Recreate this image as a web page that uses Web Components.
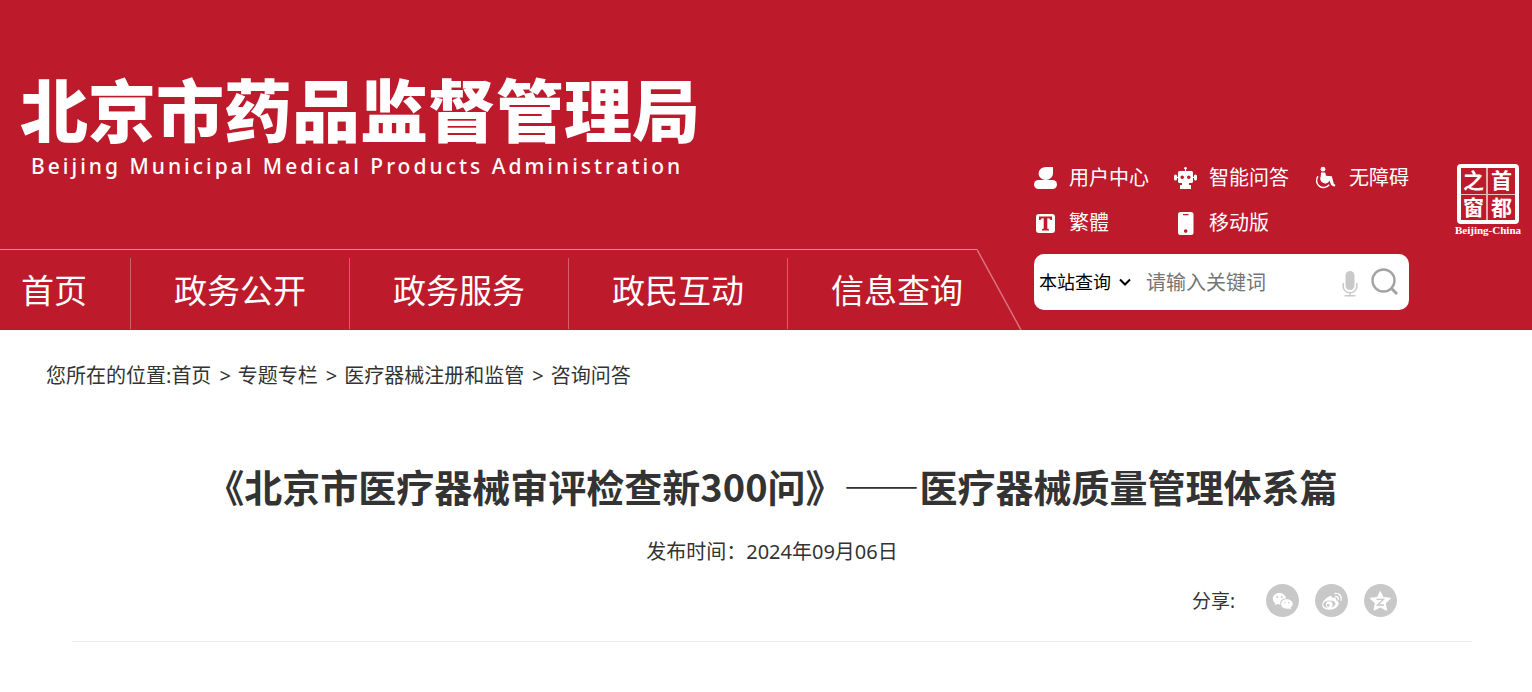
<!DOCTYPE html>
<html lang="zh-CN">
<head>
<meta charset="utf-8">
<meta name="viewport" content="width=device-width, initial-scale=1">
<title>北京市药品监督管理局</title>
<style>
  body {
    margin: 0;
    background: #fff;
    color: #333;
    font: 20px/28px "Noto Sans", "Noto Sans CJK SC", sans-serif;
    --brand: #bd1a2c;
    --hairline: #de8c95;
  }
</style>
</head>
<body>
<site-header></site-header>
<main>
  <bread-crumb></bread-crumb>
  <article-head date="2024年09月06日">《北京市医疗器械审评检查新300问》——医疗器械质量管理体系篇</article-head>
</main>

<template id="site-header">
  <style>
    :host { display: block; background: var(--brand); color: #fff; }
    header { display: flex; align-items: flex-end; justify-content: space-between; min-height: 330px; }
    .left { display: flex; flex-direction: column; gap: 65px; }
    .right { display: flex; align-items: flex-start; gap: 45px; padding: 0 10px 20px 0; }
    .panel { width: 375px; }
  </style>
  <header>
    <div class="left"><site-logo></site-logo><site-nav></site-nav></div>
    <div class="right">
      <div class="panel"><tool-links></tool-links><site-search></site-search></div>
      <capital-seal></capital-seal>
    </div>
  </header>
</template>

<template id="site-logo">
  <style>
    :host { display: block; padding-left: 20px; white-space: nowrap; }
    h1 { margin: 0; font: 900 68px/70px "Liberation Sans", "Noto Sans CJK SC", sans-serif; }
    p { margin: 0; padding-left: 11px; font: 500 21px/36px "Noto Sans", sans-serif; letter-spacing: 3px; }
  </style>
  <h1>北京市药品监督管理局</h1>
  <p lang="en">Beijing Municipal Medical Products Administration</p>
</template>

<template id="site-nav">
  <style>
    :host { display: block; }
    nav { display: flex; }
    ul { display: flex; margin: 0; padding: 8px 14px 1px 0; list-style: none; border-top: 1px solid var(--hairline); }
    li { height: 71px; padding: 0 43px; border-right: 1px solid #d45f6c; }
    li:first-child { padding-left: 21px; }
    li:last-child { padding-right: 0; border: 0; }
    a { display: block; color: inherit; text-decoration: none; font-size: 33px; line-height: 66px; }
    svg { display: block; width: 45px; height: 81px; }
  </style>
  <nav aria-label="主导航">
    <ul>
      <li><a href="#">首页</a></li>
      <li><a href="#">政务公开</a></li>
      <li><a href="#">政务服务</a></li>
      <li><a href="#">政民互动</a></li>
      <li><a href="#">信息查询</a></li>
    </ul>
    <svg viewBox="0 0 45 81" aria-hidden="true"><path d="M0 .5 44 81" fill="none" stroke="#d9747f" stroke-width="1.5"/></svg>
  </nav>
</template>

<template id="tool-links">
  <style>
    :host { display: block; }
    ul { display: grid; grid-template-columns: 140px 140px 1fr; row-gap: 17px; margin: 0; padding: 0 0 17px; list-style: none; }
    a { display: flex; align-items: center; gap: 11px; color: inherit; text-decoration: none; white-space: nowrap; line-height: 28px; }
    svg { width: 24px; height: 24px; fill: #fff; flex: none; }
  </style>
  <ul>
    <li><a href="#"><svg viewBox="0 0 24 24"><path d="M12 1h7v6.500a7.200 6.500 0 1 1-7-6.500z"/><rect y="14" width="23" height="9" rx="4.500"/></svg>用户中心</a></li>
    <li><a href="#"><svg viewBox="0 0 24 24"><circle cx="11.500" cy="2.300" r="1.300"/><path d="M11 2h1v4h-1z"/><path fill-rule="evenodd" d="M5.500 5h12q1.500 0 1.500 1.500v9q0 1.500-1.500 1.500h-12Q4 17 4 15.500v-9Q4 5 5.500 5zm2.700 4.500a1.800 1.800 0 1 0 0 3.600 1.800 1.800 0 0 0 0-3.600zm6.600 0a1.800 1.800 0 1 0 0 3.600 1.800 1.800 0 0 0 0-3.600z"/><rect y="8.500" width="3" height="6" rx="1.500"/><rect x="20" y="8.500" width="3" height="6" rx="1.500"/><path d="M2 10.800h2.500V12H2zM18.500 10.800H21V12h-2.500zM8 17h7v2h2v4H6v-4h2z"/></svg>智能问答</a></li>
    <li><a href="#"><svg viewBox="0 0 24 24"><circle cx="9" cy="3.200" r="2.400"/><path d="M7 6.500h4.200l.8 3.200 5.800.5 2 7.600 1.800 1.200-1.400 1.800-3-1.700-1.700-4.300A4.600 4.600 0 1 1 6.800 10.200z"/><path d="M4 10.200a7 7 0 1 0 11.200 8.600" fill="none" stroke="#fff" stroke-width="1.500"/></svg>无障碍</a></li>
    <li><a href="#"><svg viewBox="0 0 24 24"><path fill-rule="evenodd" d="M5 3h13q3 0 3 3v13q0 3-3 3H5q-3 0-3-3V6q0-3 3-3zm0 2.500V9h1.500q.3-1.800 2-1.800h1.200v10q0 1-1.700 1.100v1.200h7v-1.200q-1.700-.1-1.700-1.100v-10h1.200q1.700 0 2 1.800H18V5.500z"/></svg>繁體</a></li>
    <li><a href="#"><svg viewBox="0 0 24 24"><path fill-rule="evenodd" d="M6.500 1H17q2.500 0 2.500 2.500v18Q19.500 24 17 24H6.500Q4 24 4 21.500v-18Q4 1 6.500 1zM9 3v1.200h5.500V3zm2.700 15.300a1.800 1.800 0 1 0 0 3.600 1.800 1.800 0 0 0 0-3.600z"/></svg>移动版</a></li>
  </ul>
</template>

<template id="site-search">
  <style>
    :host { display: block; }
    form { display: flex; align-items: center; height: 56px; padding: 0 11px 0 5px; box-sizing: border-box; background: #fff; border-radius: 10px; }
    select, input, button { border: 0; margin: 0; padding: 0; background: none; outline: 0; font: inherit; }
    .scope { display: grid; grid-template-columns: 1fr; align-items: center; width: 92px; margin-right: 15px; }
    .scope > * { grid-area: 1 / 1; }
    select { appearance: none; width: 92px; font-size: 18px; color: #000; line-height: 28px; }
    .scope svg { justify-self: end; width: 12px; height: 8px; pointer-events: none; }
    input { flex: 1; min-width: 0; padding-top: 2px; color: #333; }
    input::placeholder { color: #757575; opacity: 1; }
    button { display: block; cursor: pointer; }
    button svg { display: block; }
    .mic { margin: 4px 13px 0 0; }
  </style>
  <form role="search">
    <label class="scope">
      <select aria-label="查询范围"><option>本站查询</option></select>
      <svg viewBox="0 0 12 8"><path d="M1 1.500 6 6.500l5-5" fill="none" stroke="#000" stroke-width="2"/></svg>
    </label>
    <input type="text" placeholder="请输入关键词" aria-label="关键词">
    <button class="mic" type="button" aria-label="语音输入"><svg width="16" height="26" viewBox="0 0 16 26"><rect x="3.500" y="0" width="9" height="19" rx="4.500" fill="#c9c9c9"/><path d="M1.200 12v3.500a6.800 6.300 0 0 0 13.600 0V12M8 22v3M2.500 24.800h11" fill="none" stroke="#c9c9c9" stroke-width="1.500"/></svg></button>
    <button type="submit" aria-label="搜索"><svg width="27" height="28" viewBox="0 0 27 28"><circle cx="12.500" cy="12.500" r="11" fill="none" stroke="#a3a3a3" stroke-width="2.400"/><path d="m20.500 20.500 5.500 5.500" stroke="#a3a3a3" stroke-width="3"/></svg></button>
  </form>
</template>

<template id="capital-seal">
  <style>
    :host { display: block; width: 68px; }
    a { display: flex; flex-direction: column; align-items: center; color: inherit; text-decoration: none; }
    .stamp { display: grid; grid-template-columns: 1fr 1fr; width: 62px; height: 60px; box-sizing: border-box; border: 4px solid #fff; border-radius: 4px; text-align: center; }
    .stamp span { padding-top: 2px; font: 700 21px/23px "Liberation Serif", "Noto Sans CJK SC", serif; }
    .stamp span:nth-child(odd) { border-right: 2px solid #e8a9b0; }
    .stamp span:nth-child(-n+2) { border-bottom: 1px solid #eec0c5; }
    small { font: 700 11px/12px "Liberation Serif", serif; white-space: nowrap; }
  </style>
  <a href="#"><div class="stamp"><span>之</span><span>首</span><span>窗</span><span>都</span></div><small lang="en">Beijing-China</small></a>
</template>

<template id="bread-crumb">
  <style>
    :host { display: block; padding: 32px 46px 0; }
    a { color: inherit; text-decoration: none; }
    i { font-style: normal; padding: 0 7px 0 8px; }
  </style>
  <nav aria-label="当前位置">您所在的位置:<a href="#">首页</a><i>&gt;</i><a href="#">专题专栏</a><i>&gt;</i><a href="#">医疗器械注册和监管</a><i>&gt;</i><a href="#">咨询问答</a></nav>
</template>

<template id="article-head">
  <style>
    :host { display: block; margin: 68px 60px 0 72px; border-bottom: 1px solid #ebebeb; text-align: center; }
    h2 { margin: 0; font: 700 38px/56px "Noto Sans CJK SC", sans-serif; }
    p { margin: 24px 0 0; }
    share-bar { margin-top: 18px; }
  </style>
  <h2><slot></slot></h2>
  <p>发布时间：<time></time></p>
  <share-bar></share-bar>
</template>

<template id="share-bar">
  <style>
    :host { display: flex; justify-content: flex-end; align-items: center; gap: 16px; padding: 0 75px 24px 0; font-size: 19px; }
    span { margin-right: 15px; }
    a, svg { display: block; }
    svg { width: 33px; height: 33px; }
  </style>
  <span>分享:</span>
  <a href="#" aria-label="分享到微信"><svg viewBox="0 0 33 33"><circle cx="16.500" cy="16.500" r="16.500" fill="#c8c8c8"/><path fill="#fff" d="M13.500 9C9.500 9 6.800 11.500 6.800 14.700c0 1.900 1 3.500 2.600 4.500l-.6 2.200 2.500-1.300c1 .3 2 .4 3.200.3-1-3.400 1.800-6 5.600-5.900C19.800 11.500 17.300 9 13.500 9z"/><path fill="#fff" d="M20.800 15.300c-3.200 0-5.700 2-5.700 4.800s2.500 4.700 5.700 4.700c.8 0 1.500-.1 2.100-.3l2.200 1.100-.5-1.900c1.300-.9 2.100-2.100 2.100-3.600 0-2.800-2.600-4.800-5.900-4.800z"/><g fill="#c8c8c8"><circle cx="11.200" cy="13" r=".9"/><circle cx="15.800" cy="13" r=".9"/><circle cx="18.800" cy="18.700" r=".7"/><circle cx="22.700" cy="18.700" r=".7"/></g></svg></a>
  <a href="#" aria-label="分享到微博"><svg viewBox="0 0 33 33"><circle cx="16.500" cy="16.500" r="16.500" fill="#c8c8c8"/><path fill="#fff" fill-rule="evenodd" d="M14 12.500c1.800-.8 3.300-.4 3 1.500 2.500-.9 4.500-.4 3.800 2 6 2.300 2 9.700-6.500 9.700C4.500 25.700 5.500 17 14 12.500zm0 4c-3.600.3-6 2.400-5.700 4.500.3 2 3 3.200 6.300 2.900 3.600-.3 6.100-2.300 5.900-4.400-.2-2-3-3.300-6.500-3z"/><path fill="#fff" fill-rule="evenodd" d="M14.200 17.300a3.400 3.400 0 1 0 .1 6.800 3.400 3.400 0 0 0-.1-6.800zm-1 2.700a1.400 1.400 0 1 1 0 2.800 1.400 1.400 0 0 1 0-2.800z"/><path d="M20 9.500c4-.7 7.200 2.600 6 6.800M20.500 12.500c1.900-.2 3.200 1.200 2.700 3" fill="none" stroke="#fff" stroke-width="1.400" stroke-linecap="round"/></svg></a>
  <a href="#" aria-label="分享到QQ空间"><svg viewBox="0 0 33 33"><circle cx="16.500" cy="16.500" r="16.500" fill="#c8c8c8"/><path fill="#fff" stroke="#fff" stroke-linejoin="round" d="m16.300 7.500 2.900 6 7.300.8-5.200 5 1.300 7-6.300-3.300-6.300 3.300 1.300-7-5.200-5 7.300-.8z"/><path d="M12.500 15.300h7l-6 5.700h6.500" fill="none" stroke="#c8c8c8" stroke-width="1.300"/></svg></a>
</template>

<script>
  function define(name, setup) {
    customElements.define(name, class extends HTMLElement {
      constructor() {
        super();
        const root = this.attachShadow({ mode: "open" });
        root.append(document.getElementById(name).content.cloneNode(true));
      }
      connectedCallback() {
        if (setup) setup(this, this.shadowRoot);
      }
    });
  }
  ["site-logo", "site-nav", "tool-links", "site-search", "capital-seal",
   "site-header", "bread-crumb", "share-bar"].forEach(name => define(name));
  define("article-head", (host, root) => {
    root.querySelector("time").textContent = host.getAttribute("date");
  });
</script>
</body>
</html>
